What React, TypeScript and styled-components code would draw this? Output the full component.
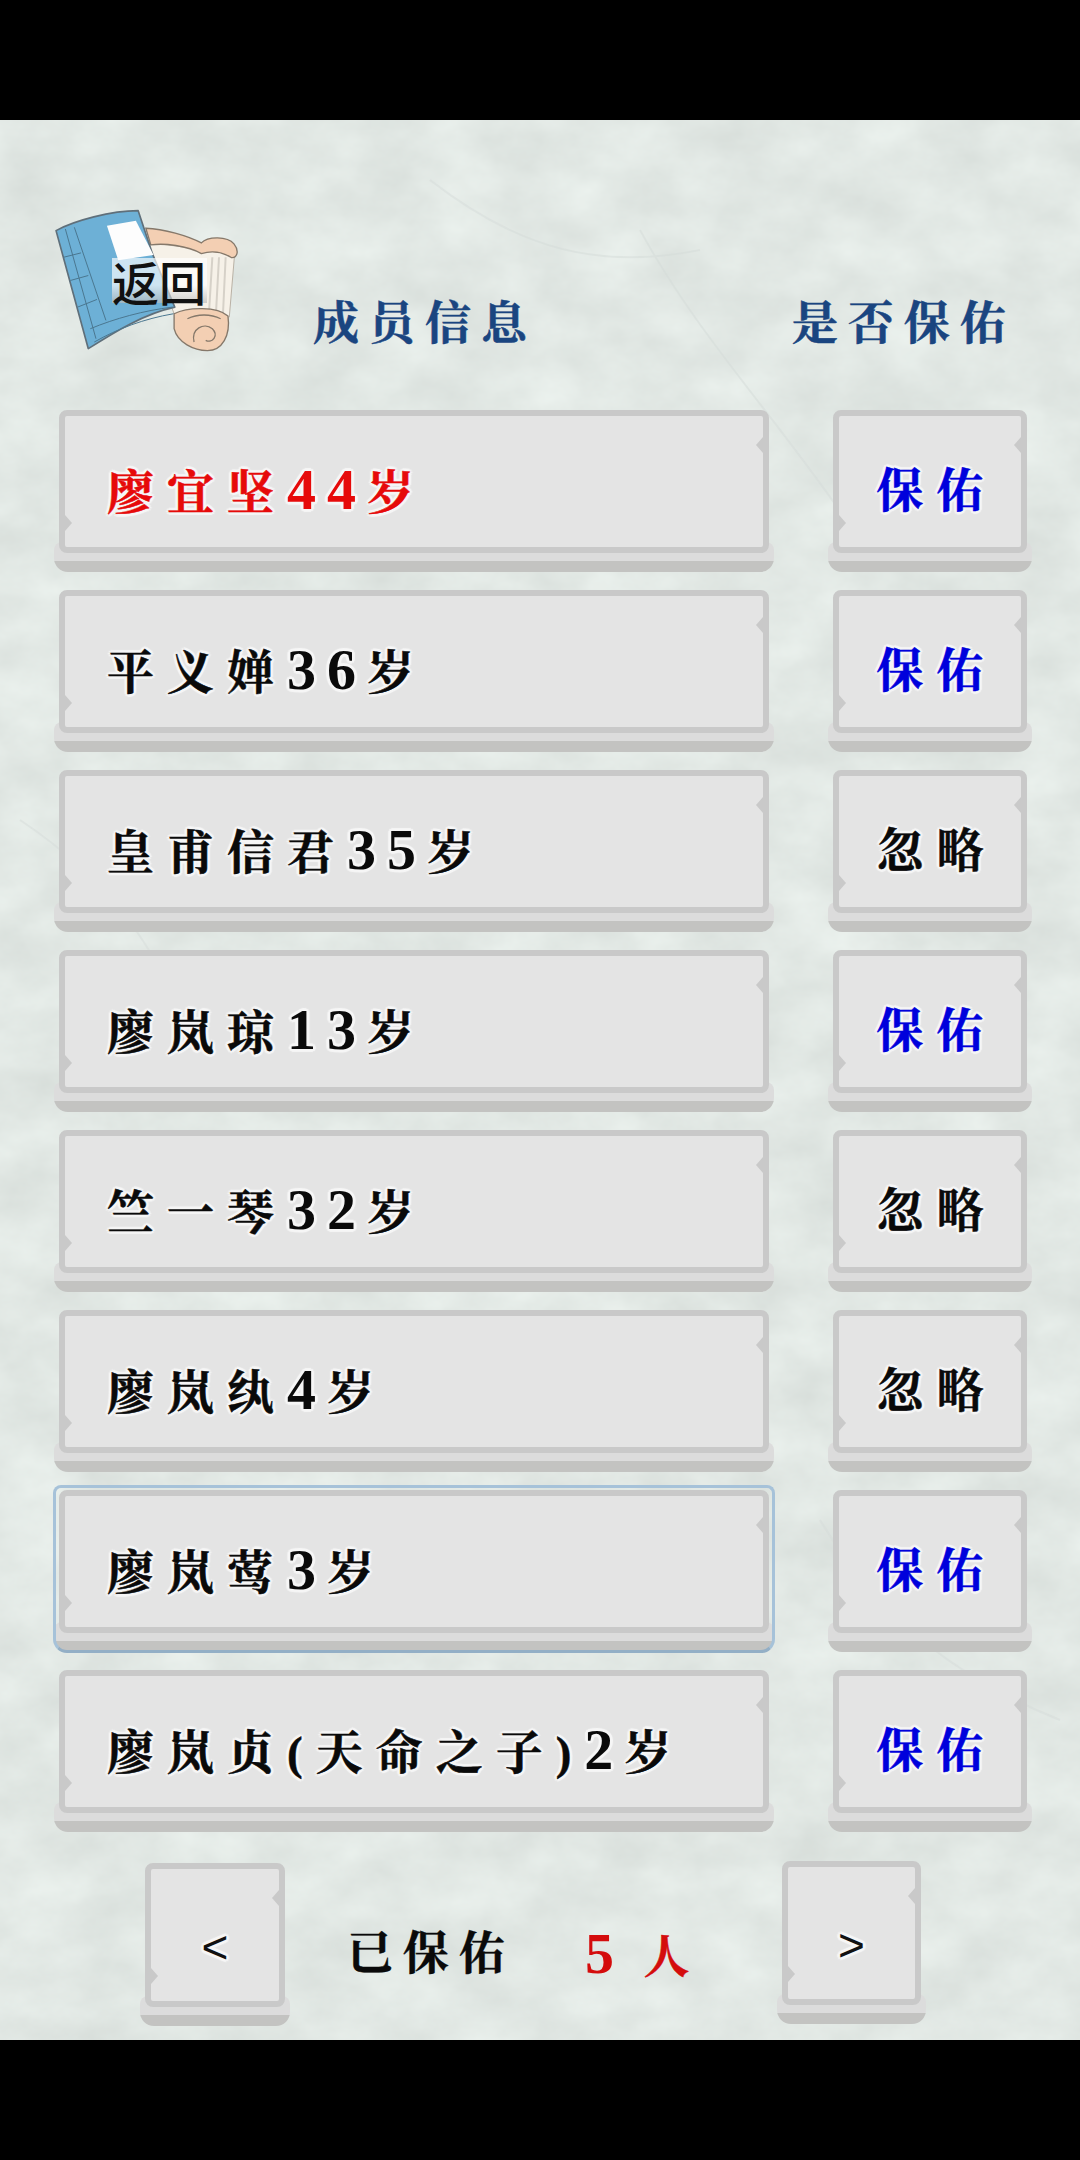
import React from "react";
import styled, { createGlobalStyle, css } from "styled-components";

const GlobalStyle = createGlobalStyle`
  html, body {
    margin: 0;
    padding: 0;
    background: #000;
  }
`;

const serif = `"Liberation Serif", "Noto Serif CJK SC", "Noto Sans CJK SC", serif`;

const halo = css`
  text-shadow:
    3px 0 1px #f6f6f6, -3px 0 1px #f6f6f6, 0 3px 1px #f6f6f6, 0 -3px 1px #f6f6f6,
    2px 2px 1px #f6f6f6, -2px 2px 1px #f6f6f6, 2px -2px 1px #f6f6f6, -2px -2px 1px #f6f6f6;
`;

const Page = styled.div`
  width: 1080px;
  height: 2160px;
  padding: 120px 0;
  box-sizing: border-box;
  background: #000;
  overflow: hidden;
`;

const Paper = styled.main`
  position: relative;
  height: 1920px;
  box-sizing: border-box;
  padding: 90px 48px 0 54px;
  font-family: ${serif};
  font-weight: 700;
  overflow: hidden;
`;

const Texture = styled.svg`
  position: absolute;
  inset: 0;
  width: 1080px;
  height: 1920px;
`;

const Layer = styled.div`
  position: relative;
`;

const Header = styled.header`
  display: flex;
  align-items: flex-end;
  height: 142px;
  margin-bottom: 58px;
`;

const BackButton = styled.div`
  position: relative;
  width: 187px;
  height: 143px;
  margin-right: 72px;
`;

const BackLabel = styled.span`
  position: absolute;
  left: 58px;
  top: 49px;
  width: 95px;
  height: 45px;
  font: 500 47px/45px "Noto Sans CJK SC", sans-serif;
  color: #111;
  white-space: nowrap;
  background: linear-gradient(#ffffffa8, #ffffffa8 60%, #b8b8b8a8);
`;

const HeaderTitle = styled.h2<{ $width: number }>`
  width: ${p => p.$width}px;
  margin: 0;
  font: inherit;
  font-size: 46px;
  line-height: 56px;
  letter-spacing: 10px;
  color: #1a4580;
  white-space: nowrap;
  -webkit-text-stroke: 0.5px currentColor;
`;

const Rows = styled.div`
  display: grid;
  grid-template-columns: 720px 204px;
  column-gap: 54px;
  row-gap: 18px;
`;

const Key = styled.div<{ $selected?: boolean }>`
  position: relative;
  height: 162px;
  box-sizing: border-box;
  padding: 0 5px 19px;

  &::before {
    content: "";
    position: absolute;
    left: 0;
    right: 0;
    bottom: 0;
    height: 30px;
    border-radius: 8px 8px 14px 14px;
    background: linear-gradient(to bottom, #dcdcdc 0, #dcdcdc 19px, #c3c3c1 19px);
  }

  ${p =>
    p.$selected &&
    css`
      &::after {
        content: "";
        position: absolute;
        inset: -5px -1px -1px -1px;
        border: 3px solid #a6c2d9;
        border-bottom-color: #93afc6;
        border-radius: 8px 8px 14px 14px;
      }
    `}
`;

const Face = styled.div<{ $align?: "start" | "center" }>`
  position: relative;
  display: flex;
  align-items: center;
  justify-content: ${p => (p.$align === "center" ? "center" : "flex-start")};
  height: 100%;
  box-sizing: border-box;
  padding: 20px 0 0 ${p => (p.$align === "center" ? "0" : "42px")};
  background: #e4e4e4;
  border: 6px solid #c9c9c9;
  border-radius: 8px;

  &::before,
  &::after {
    content: "";
    position: absolute;
    width: 7px;
    height: 16px;
    background: #c9c9c9;
  }

  &::before {
    right: 0;
    top: 21px;
    clip-path: polygon(100% 0, 0 50%, 100% 100%);
  }

  &::after {
    left: 0;
    top: 99px;
    clip-path: polygon(0 0, 100% 50%, 0 100%);
  }
`;

const Label = styled.span<{ $color?: string }>`
  font-size: 47px;
  line-height: 60px;
  letter-spacing: 13px;
  white-space: nowrap;
  color: ${p => p.$color || "#0a0a0a"};
  -webkit-text-stroke: 0.5px currentColor;
  ${halo}
`;

const Digits = styled.span`
  font-size: 58px;
  letter-spacing: 11px;
  -webkit-text-stroke: 0;
`;

const ActionLabel = styled(Label)`
  margin-top: -2px;
  margin-right: -13px;
`;

const Footer = styled.footer`
  display: flex;
  align-items: flex-start;
  margin-top: 31px;
  padding-left: 86px;
`;

const PagerKey = styled(Key)<{ $lift?: boolean }>`
  width: ${p => (p.$lift ? 149 : 150)}px;
  height: 163px;
  margin-top: ${p => (p.$lift ? -2 : 0)}px;
  flex: none;
`;

const Arrow = styled.span`
  font: 400 46px/46px "Liberation Sans", sans-serif;
  color: #111;
  margin-top: 3px;
  ${halo}
`;

const Summary = styled.div`
  display: flex;
  width: 487px;
  padding: 61px 0 0 57px;
  box-sizing: border-box;
  font-size: 46px;
  line-height: 60px;
  letter-spacing: 10px;
  color: #0a0a0a;
  white-space: nowrap;
  -webkit-text-stroke: 0.4px currentColor;
`;

const Count = styled.span`
  margin-left: 70px;
  color: #d40c0c;
  word-spacing: -2px;
`;

const CountDigit = styled.span`
  font-size: 58px;
  -webkit-text-stroke: 0;
`;

const members = [
  { name: "廖宜坚", age: 44, kept: true, color: "#e60a0a" },
  { name: "平义婵", age: 36, kept: true },
  { name: "皇甫信君", age: 35, kept: false },
  { name: "廖岚琼", age: 13, kept: true },
  { name: "竺一琴", age: 32, kept: false },
  { name: "廖岚纨", age: 4, kept: false },
  { name: "廖岚莺", age: 3, kept: true, selected: true },
  { name: "廖岚贞(天命之子)", age: 2, kept: true },
];

function PaperTexture() {
  return (
    <Texture viewBox="0 0 1080 1920" preserveAspectRatio="none">
      <defs>
        <filter id="paper" x="0" y="0" width="100%" height="100%" colorInterpolationFilters="sRGB">
          <feTurbulence type="fractalNoise" baseFrequency="0.014 0.02" numOctaves="5" seed="11" />
          <feColorMatrix
            type="matrix"
            values="0 0 0 0.09 0.84  0 0 0 0.09 0.865  0 0 0 0.09 0.85  0 0 0 0 1"
          />
        </filter>
      </defs>
      <rect width="1080" height="1920" fill="#e3e9e6" filter="url(#paper)" />
      <g fill="none" stroke="#d5dcd9" strokeWidth="2" opacity="0.5">
        <path d="M640 110 C700 220 780 300 860 420" />
        <path d="M430 60 C520 130 600 150 700 130" />
        <path d="M20 700 C110 760 160 830 190 920" />
        <path d="M820 1400 C880 1500 960 1560 1060 1600" />
      </g>
    </Texture>
  );
}

function BookIcon() {
  return (
    <svg width="187" height="143" viewBox="70 90 560 430">
      <path d="M350 190 L612 225 L596 415 L430 405 Z" fill="#f6f1e8" stroke="#b9b1a5" strokeWidth="3" />
      <path d="M545 235 L535 400 M565 235 L556 402 M585 235 L577 405" stroke="#d6d1c8" strokeWidth="6" fill="none" />
      <path
        d="M345 148 C400 150 470 170 512 192 C530 172 590 170 610 195 C628 218 618 238 602 236 C570 216 540 216 512 224 C470 200 400 192 360 198 Z"
        fill="#f3cfb3"
        stroke="#85786a"
        strokeWidth="4"
      />
      <path
        d="M430 405 C470 385 560 382 592 412 C600 470 575 516 530 516 C490 516 440 492 430 450 Z"
        fill="#f3cfb3"
        stroke="#85786a"
        strokeWidth="4"
      />
      <path
        d="M490 490 C480 450 520 430 545 450 C565 470 545 495 525 485 M470 420 C500 405 540 405 570 420"
        fill="none"
        stroke="#85786a"
        strokeWidth="4"
      />
      <path
        d="M75 155 C130 125 240 95 322 95 L365 225 L432 385 C340 405 250 460 172 510 Z"
        fill="#6db0d6"
        stroke="#5f6f7a"
        strokeWidth="5"
        strokeLinejoin="round"
      />
      <path d="M228 140 L315 125 L368 228 L262 244 Z" fill="#fdfdfd" />
      <path
        d="M103 150 L195 480 M130 145 L225 425 M98 235 L150 222 M118 305 L172 290 M140 385 L198 362 M178 450 C250 420 340 395 425 385 M190 490 C260 450 340 420 428 405"
        fill="none"
        stroke="#4a7690"
        strokeWidth="3"
      />
    </svg>
  );
}

export default function App() {
  return (
    <>
      <GlobalStyle />
      <Page>
        <Paper>
          <PaperTexture />
          <Layer>
            <Header>
              <BackButton>
                <BookIcon />
                <BackLabel>返回</BackLabel>
              </BackButton>
              <HeaderTitle $width={479}>成员信息</HeaderTitle>
              <HeaderTitle $width={230}>是否保佑</HeaderTitle>
            </Header>

            <Rows>
              {members.map(member => (
                <React.Fragment key={member.name}>
                  <Key $selected={member.selected}>
                    <Face>
                      <Label $color={member.color}>
                        {member.name}
                        <Digits>{member.age}</Digits>岁
                      </Label>
                    </Face>
                  </Key>
                  <Key>
                    <Face $align="center">
                      <ActionLabel $color={member.kept ? "#0000dc" : "#0a0a0a"}>
                        {member.kept ? "保佑" : "忽略"}
                      </ActionLabel>
                    </Face>
                  </Key>
                </React.Fragment>
              ))}
            </Rows>

            <Footer>
              <PagerKey>
                <Face $align="center">
                  <Arrow>&lt;</Arrow>
                </Face>
              </PagerKey>
              <Summary>
                已保佑
                <Count>
                  <CountDigit>5</CountDigit> 人
                </Count>
              </Summary>
              <PagerKey $lift>
                <Face $align="center">
                  <Arrow>&gt;</Arrow>
                </Face>
              </PagerKey>
            </Footer>
          </Layer>
        </Paper>
      </Page>
    </>
  );
}
